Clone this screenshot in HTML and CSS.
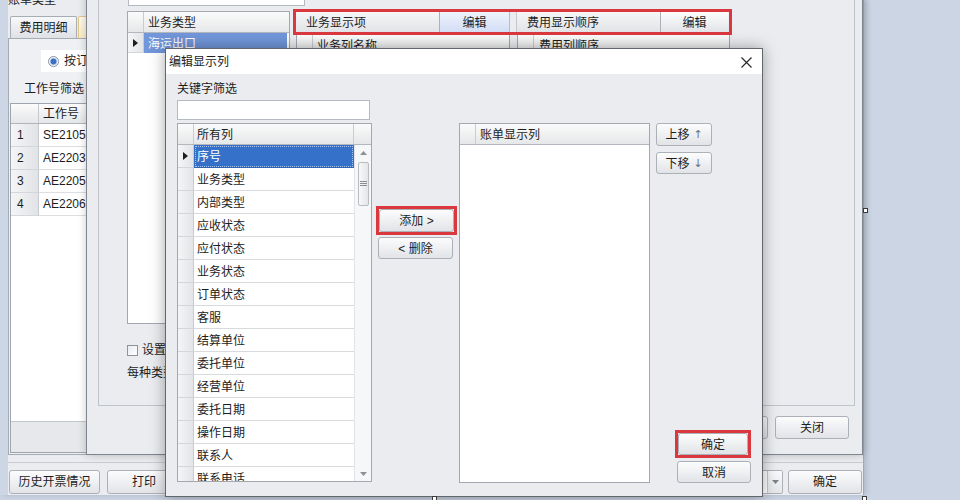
FILE: index.html
```html
<!DOCTYPE html>
<html lang="zh-CN">
<head>
<meta charset="utf-8">
<title>编辑显示列</title>
<link rel="stylesheet" href="styles.css">
</head>
<body>
<div class="desktop">

  <!-- background window -->
  <div class="win win-main">
    <div class="main-caption">账单类型</div>
    <div class="tabs">
      <div class="tab">费用明细</div>
      <div class="tab tab-active">费用汇总</div>
    </div>
    <div class="tabpage">
      <div class="radio-panel">
        <span class="radio"></span><span>按订单</span>
      </div>
      <div class="filter-label">工作号筛选</div>
      <div class="job-grid">
        <div class="jg-head"><span class="jg-ind"></span><span class="jg-cell">工作号</span></div>
        <div class="jg-row"><span class="jg-ind">1</span><span class="jg-cell">SE2105</span></div>
        <div class="jg-row"><span class="jg-ind">2</span><span class="jg-cell">AE2203</span></div>
        <div class="jg-row"><span class="jg-ind">3</span><span class="jg-cell">AE2205</span></div>
        <div class="jg-row"><span class="jg-ind">4</span><span class="jg-cell">AE2206</span></div>
        <div class="jg-fill"></div>
        <div class="jg-foot"></div>
      </div>
    </div>
    <div class="main-bottom">
      <button class="btn btn-hist">历史开票情况</button>
      <button class="btn btn-print">打印</button>
      <span class="grow"></span>
      <span class="combo"><span class="combo-edit"></span><span class="combo-drop"><svg width="7" height="4" viewBox="0 0 7 4"><polygon points="0,0 7,0 3.5,4" fill="#7d828a"/></svg></span></span>
      <button class="btn btn-ok-main">确定</button>
    </div>
  </div>

  <!-- middle dialog -->
  <div class="win win-mid">
    <div class="groupbox">
      <div class="gb-input"></div>
      <div class="gb-row">
        <div class="type-grid">
          <div class="tg-head"><span class="ind-h"></span><span class="tg-col">业务类型</span></div>
          <div class="tg-row"><span class="ind"><svg width="5" height="8" viewBox="0 0 5 8"><polygon points="0,0 5,4 0,8" fill="#1e1e1e"/></svg></span><span class="tg-sel">海运出口</span></div>
        </div>
        <div class="cfg-area">
          <div class="red-frame cfg-heads">
            <div class="panel-head ph-a"><span class="ph-label">业务显示项</span><button class="btn ph-btn ph-btn-hot">编辑</button></div>
            <div class="ph-gap"></div>
            <div class="panel-head ph-b"><span class="ph-label">费用显示顺序</span><button class="btn ph-btn ph-btn-b">编辑</button></div>
          </div>
          <div class="cfg-grids">
            <div class="cfg-grid cg-a"><div class="cg-head"><span class="ind-h"></span><span class="cg-col">业务列名称</span></div></div>
            <div class="cfg-grid cg-b"><div class="cg-head"><span class="ind-h"></span><span class="cg-col cg-col-b">费用列顺序</span></div></div>
          </div>
        </div>
      </div>
      <div class="gb-check"><span class="checkbox"></span><span>设置默认</span></div>
      <div class="gb-note">每种类型</div>
    </div>
    <div class="mid-buttons">
      <button class="btn mid-btn">保存</button>
      <button class="btn mid-btn">关闭</button>
    </div>
  </div>

  <!-- front dialog -->
  <div class="win win-dlg">
    <div class="dlg-title">
      <span>编辑显示列</span>
      <svg class="dlg-close" width="11" height="11" viewBox="0 0 11 11"><path d="M0.5 0.5 L10.5 10.5 M10.5 0.5 L0.5 10.5" stroke="#2b2b2b" stroke-width="1.2" fill="none"/></svg>
    </div>
    <div class="dlg-body">
      <div class="dlg-label">关键字筛选</div>
      <div class="dlg-input"></div>
      <div class="dlg-row">
        <div class="all-grid">
          <div class="ag-head"><span class="ind-h"></span><span class="ag-hcol">所有列</span><span class="ag-hscroll"></span></div>
          <div class="ag-body">
            <div class="ag-rows">
              <div class="ag-row"><span class="ind"><svg width="5" height="8" viewBox="0 0 5 8"><polygon points="0,0 5,4 0,8" fill="#1e1e1e"/></svg></span><span class="ag-cell ag-sel">序号</span></div>
              <div class="ag-row"><span class="ind"></span><span class="ag-cell">业务类型</span></div>
              <div class="ag-row"><span class="ind"></span><span class="ag-cell">内部类型</span></div>
              <div class="ag-row"><span class="ind"></span><span class="ag-cell">应收状态</span></div>
              <div class="ag-row"><span class="ind"></span><span class="ag-cell">应付状态</span></div>
              <div class="ag-row"><span class="ind"></span><span class="ag-cell">业务状态</span></div>
              <div class="ag-row"><span class="ind"></span><span class="ag-cell">订单状态</span></div>
              <div class="ag-row"><span class="ind"></span><span class="ag-cell">客服</span></div>
              <div class="ag-row"><span class="ind"></span><span class="ag-cell">结算单位</span></div>
              <div class="ag-row"><span class="ind"></span><span class="ag-cell">委托单位</span></div>
              <div class="ag-row"><span class="ind"></span><span class="ag-cell">经营单位</span></div>
              <div class="ag-row"><span class="ind"></span><span class="ag-cell">委托日期</span></div>
              <div class="ag-row"><span class="ind"></span><span class="ag-cell">操作日期</span></div>
              <div class="ag-row"><span class="ind"></span><span class="ag-cell">联系人</span></div>
              <div class="ag-row"><span class="ind"></span><span class="ag-cell">联系电话</span></div>
            </div>
            <div class="vscroll">
              <span class="vs-arrow"><svg width="7" height="4" viewBox="0 0 7 4"><polygon points="0,4 3.5,0 7,4" fill="#8c9198"/></svg></span>
              <span class="vs-thumb"><svg width="7" height="6" viewBox="0 0 7 6"><path d="M0 0.5 H7 M0 2.5 H7 M0 4.5 H7" stroke="#8a8f96" stroke-width="1" fill="none"/></svg></span>
              <span class="grow"></span>
              <span class="vs-arrow vs-down"><svg width="7" height="4" viewBox="0 0 7 4"><polygon points="0,0 7,0 3.5,4" fill="#8c9198"/></svg></span>
            </div>
          </div>
        </div>
        <div class="mid-col">
          <span class="red-frame"><button class="btn btn-add">添加 &gt;</button></span>
          <button class="btn btn-del">&lt; 删除</button>
        </div>
        <div class="bill-grid">
          <div class="ag-head"><span class="ind-h"></span><span class="bg-hcol">账单显示列</span></div>
        </div>
        <div class="side-col">
          <button class="btn btn-move">上移 <span class="arr">↑</span></button>
          <button class="btn btn-move btn-down">下移 <span class="arr">↓</span></button>
          <span class="grow"></span>
          <span class="red-frame ok-frame"><button class="btn btn-ok">确定</button></span>
          <button class="btn btn-cancel">取消</button>
        </div>
      </div>
    </div>
  </div>

  <span class="handle h1"></span>
  <span class="handle h2"></span>
  <span class="handle h3"></span>
</div>
</body>
</html>
```

FILE: styles.css
```css
* { box-sizing: border-box; }
html, body { margin: 0; padding: 0; }
body {
  width: 960px; height: 500px; overflow: hidden;
  background: #cad4e3;
  font-family: "Liberation Sans", "Noto Sans CJK SC", sans-serif;
  font-size: 12px; line-height: 14px; color: #1d1d1d;
}
button { font: inherit; color: inherit; }
.desktop {
  position: relative; width: 960px; height: 500px; overflow: hidden;
  background: #cbd5e4;
}
.win { position: absolute; }
.grow { flex: 1; }

.btn {
  display: flex; align-items: center; justify-content: center;
  height: 23px; padding: 0;
  border: 1px solid #acb1b8; border-radius: 3px;
  background: linear-gradient(#fcfcfd 0%, #eff0f2 50%, #e1e3e7 100%);
  line-height: 14px; white-space: nowrap;
}
.red-frame { display: flex; border: 3px solid #d9383e; }

.ind-h {
  width: 16px; flex: none; height: 100%;
  border-right: 1px solid #c8cbd0;
}
.ind {
  width: 16px; flex: none; height: 100%;
  display: flex; align-items: center; justify-content: center;
  background: linear-gradient(90deg, #f4f5f6, #e2e4e7);
  border-right: 1px solid #c8cbd0;
  border-bottom: 1px solid #d3d6da;
}

/* ---------- background window ---------- */
.win-main {
  left: 0; top: 0; width: 864px; height: 495px;
  background: #eaecef;
  border-left: 8px solid #ccd6e5;
  border-right: 1px solid #a3a9b1;
  box-shadow: 2px 0 6px rgba(0,0,0,0.15);
  display: flex; flex-direction: column;
}
.main-caption { margin-top: -7px; height: 14px; }
.tabs { display: flex; margin-top: 9px; height: 22px; padding-left: 2px; }
.tab {
  width: 67px; height: 22px;
  border: 1px solid #a7adb5; border-bottom: none; border-radius: 2px 2px 0 0;
  background: linear-gradient(#f7f8f9, #dfe1e5);
  display: flex; align-items: center; justify-content: center;
}
.tab-active {
  width: 80px; margin-left: 1px;
  background: linear-gradient(#fffaee, #fbecc6);
  border-color: #dfc68b;
}
.tabpage {
  height: 417px;
  border: 1px solid #a6acb4;
  background: #eef0f3;
  padding-left: 1px;
  display: flex; flex-direction: column; align-items: flex-start;
}
.radio-panel {
  margin: 11px 0 0 31px; width: 260px; height: 22px;
  background: #fff;
  display: flex; align-items: center; gap: 5px; padding-left: 7px;
}
.radio {
  width: 11px; height: 11px; border-radius: 50%;
  border: 1px solid #8a93a0;
  background: radial-gradient(circle, #3d6fc4 0 2.5px, #a9c0e6 3.2px, #f4f6f9 4px);
}
.filter-label { margin: 9px 0 0 14px; height: 14px; padding-top: 1px; }
.job-grid {
  margin: 8px 0 0 0; width: 760px; height: 350px;
  border: 1px solid #9fa5ae; background: #fff;
  display: flex; flex-direction: column;
}
.jg-head {
  height: 20px; flex: none; display: flex; align-items: stretch;
  background: linear-gradient(#fbfbfb, #e5e6e9);
  border-bottom: 1px solid #b1b5bb;
}
.jg-row { height: 23px; flex: none; display: flex; align-items: stretch; }
.jg-ind {
  width: 28px; flex: none; padding-left: 6px;
  display: flex; align-items: center;
  background: linear-gradient(90deg, #f4f5f6, #e1e3e6);
  border-right: 1px solid #c6c9ce;
  border-bottom: 1px solid #d3d6da;
}
.jg-head .jg-ind { background: none; border-bottom: none; }
.jg-cell {
  flex: 1; padding-left: 4px; display: flex; align-items: center;
  border-bottom: 1px solid #dcdee1;
}
.jg-head .jg-cell { border-bottom: none; }
.jg-fill { flex: 1; }
.jg-foot { height: 31px; flex: none; background: #e6e8eb; border-top: 1px solid #c4c8ce; }
.main-bottom {
  margin-top: 7px; flex: 1;
  border-top: 1px solid #c9cdd3;
  padding: 7px 1px 0 1px;
  display: flex; align-items: flex-start; gap: 7px;
}
.btn-hist { width: 91px; height: 24px; }
.btn-print { width: 74px; height: 24px; }
.combo {
  width: 150px; height: 24px; display: flex; margin-right: -2px;
  border: 1px solid #acb1b8; border-radius: 2px; background: #fff;
}
.combo-edit { flex: 1; }
.combo-drop {
  width: 15px; display: flex; align-items: center; justify-content: center;
  border-left: 1px solid #c4c8ce;
  background: linear-gradient(#f8f9fa, #e4e6e9);
}
.btn-ok-main { width: 74px; height: 24px; }

/* ---------- middle dialog ---------- */
.win-mid {
  left: 86px; top: -30px; width: 777px; height: 485px;
  background: #eaecef;
  border: 1px solid #80868f;
  box-shadow: 0 0 8px rgba(0,0,0,0.22);
  display: flex; flex-direction: column;
}
.groupbox {
  margin: 9px 7px 0 11px; height: 426px;
  border: 1px solid #bfc4cb;
  padding-left: 28px;
  display: flex; flex-direction: column; align-items: flex-start;
}
.gb-input {
  margin: 5px 0 0 1px; width: 177px; height: 20px;
  background: #fff; border: 1px solid #b5bac1;
}
.gb-row { margin-top: 3px; display: flex; align-items: flex-start; }
.type-grid {
  margin-top: 2px; width: 163px; height: 313px;
  border: 1px solid #a3a8b0; background: #fff;
  display: flex; flex-direction: column;
}
.tg-head {
  height: 21px; flex: none; display: flex;
  background: linear-gradient(#fbfbfb, #e6e7e9);
  border-bottom: 1px solid #b3b7bd;
}
.tg-col { padding: 1px 0 0 4px; display: flex; align-items: center; }
.tg-row { height: 20px; display: flex; }
.tg-sel {
  flex: 1; background: #7196d9; color: #fff;
  padding: 1px 0 0 4px; display: flex; align-items: center; margin-right: 2px;
}
.cfg-area { margin-left: 3px; width: 439px; display: flex; flex-direction: column; }
.cfg-heads { height: 26px; }
.panel-head {
  height: 20px; display: flex; align-items: stretch;
  background: linear-gradient(#f6f6f7, #e1e3e6);
  border-right: 1px solid #b9bdc4;
}
.ph-a { width: 214px; }
.ph-gap { width: 7px; border-right: 1px solid #c4c8ce; }
.ph-b { flex: 1; border-right: none; }
.ph-label { padding: 1px 0 0 10px; display: flex; align-items: center; }
.ph-btn { margin-left: auto; width: 70px; height: 20px; border-radius: 0; border-width: 0 0 0 1px; padding-top: 1px; }
.ph-btn-hot { background: linear-gradient(#eef3fc, #d3def5); }
.ph-btn-b { width: 68px; margin-right: 1px; }
.cfg-grids { height: 289px; display: flex; }
.cfg-grid { height: 100%; background: #fff; border: 1px solid #a3a8b0; border-top: none; }
.cg-a { margin-left: 3px; width: 214px; }
.cg-b { margin-left: 7px; width: 213px; }
.cg-head {
  height: 21px; display: flex;
  background: linear-gradient(#fbfbfb, #e6e7e9);
  border-bottom: 1px solid #b3b7bd;
}
.cg-col { padding: 1px 0 0 4px; display: flex; align-items: center; }
.cg-col-b { padding-left: 5px; }
.gb-check { margin-top: 19px; height: 14px; display: flex; align-items: center; gap: 4px; }
.checkbox {
  width: 11px; height: 11px; border: 1px solid #8e949c;
  background: linear-gradient(135deg, #e9ecf0, #fff);
}
.gb-note { margin-top: 9px; height: 14px; }
.mid-buttons {
  margin-top: 10px; display: flex; justify-content: flex-end; gap: 7px;
  padding-right: 13px;
}
.mid-btn { width: 74px; height: 23px; padding-top: 1px; }

/* ---------- front dialog ---------- */
.win-dlg {
  left: 165px; top: 48px; width: 598px; height: 449px;
  background: #eaecef;
  border: 1px solid #62676e;
  box-shadow: 0 0 14px rgba(0,0,0,0.35);
  display: flex; flex-direction: column;
}
.dlg-title {
  height: 25px; flex: none; background: #fff;
  display: flex; align-items: center; justify-content: space-between;
  padding: 1px 10px 0 3px;
}
.dlg-body { padding: 0 11px; display: flex; flex-direction: column; align-items: flex-start; }
.dlg-label { margin-top: 7px; height: 14px; padding-top: 1px; }
.dlg-input { margin-top: 5px; width: 193px; height: 20px; background: #fff; border: 1px solid #b5bac1; }
.dlg-row { margin-top: 3px; display: flex; align-items: flex-start; }
.all-grid {
  width: 195px; height: 359px;
  border: 1px solid #a3a8b0; background: #fff;
  display: flex; flex-direction: column;
}
.ag-head {
  height: 21px; flex: none; display: flex;
  background: linear-gradient(#fbfbfb, #e6e7e9);
  border-bottom: 1px solid #b3b7bd;
}
.ag-hcol {
  width: 160px; padding: 1px 0 0 3px; display: flex; align-items: center;
  border-right: 1px solid #c8cbd0;
}
.ag-hscroll { flex: 1; }
.ag-body { flex: 1; display: flex; overflow: hidden; }
.ag-rows { width: 176px; }
.ag-row { height: 23px; display: flex; }
.ag-cell {
  width: 160px; padding: 2px 0 0 3px; display: flex; align-items: center;
  border-bottom: 1px solid #d8dadd;
}
.ag-sel {
  background: #3571c9; color: #fff;
  outline: 1px dotted #a9c4ee; outline-offset: -2px;
  border-bottom-color: #2f64b3;
}
.vscroll {
  flex: 1; display: flex; flex-direction: column; align-items: center;
  background: #f6f7f8; border-left: 1px solid #e1e3e6;
}
.vs-arrow { height: 16px; flex: none; display: flex; align-items: center; justify-content: center; }
.vs-down { height: 14px; }
.vs-thumb {
  margin-top: 1px; width: 11px; height: 44px;
  border: 1px solid #b9bdc3; border-radius: 2px;
  background: linear-gradient(90deg, #f7f8f9, #e3e5e8);
  display: flex; align-items: center; justify-content: center;
}
.mid-col { margin-left: 4px; width: 81px; padding-top: 83px; display: flex; flex-direction: column; align-items: flex-start; }
.btn-add { width: 75px; height: 23px; padding-top: 1px; }
.btn-del { margin: 2px 0 0 2px; width: 75px; height: 22px; padding-top: 1px; }
.bill-grid {
  margin-left: 2px; width: 191px; height: 360px;
  border: 1px solid #a3a8b0; background: #fff;
}
.bg-hcol { padding: 1px 0 0 4px; display: flex; align-items: center; }
.side-col {
  margin-left: 6px; width: 95px; height: 360px;
  display: flex; flex-direction: column; align-items: flex-start;
}
.btn-move { width: 56px; height: 23px; gap: 4px; padding-top: 1px; }
.btn-down { margin-top: 6px; height: 22px; }
.arr { color: #6d7278; font-family: "DejaVu Sans", sans-serif; font-size: 11px; }
.ok-frame { align-self: flex-end; }
.btn-ok { width: 70px; height: 22px; padding-top: 1px; }
.btn-cancel { align-self: flex-end; margin-top: 3px; width: 74px; height: 22px; padding-top: 1px; }

/* selection handles */
.handle {
  position: absolute; width: 5px; height: 5px;
  background: #fff; border: 1px solid #3a3a3a;
}
.h1 { left: 863px; top: 208px; }
.h2 { left: 432px; top: 496px; }
.h3 { left: 862px; top: 496px; }
```
